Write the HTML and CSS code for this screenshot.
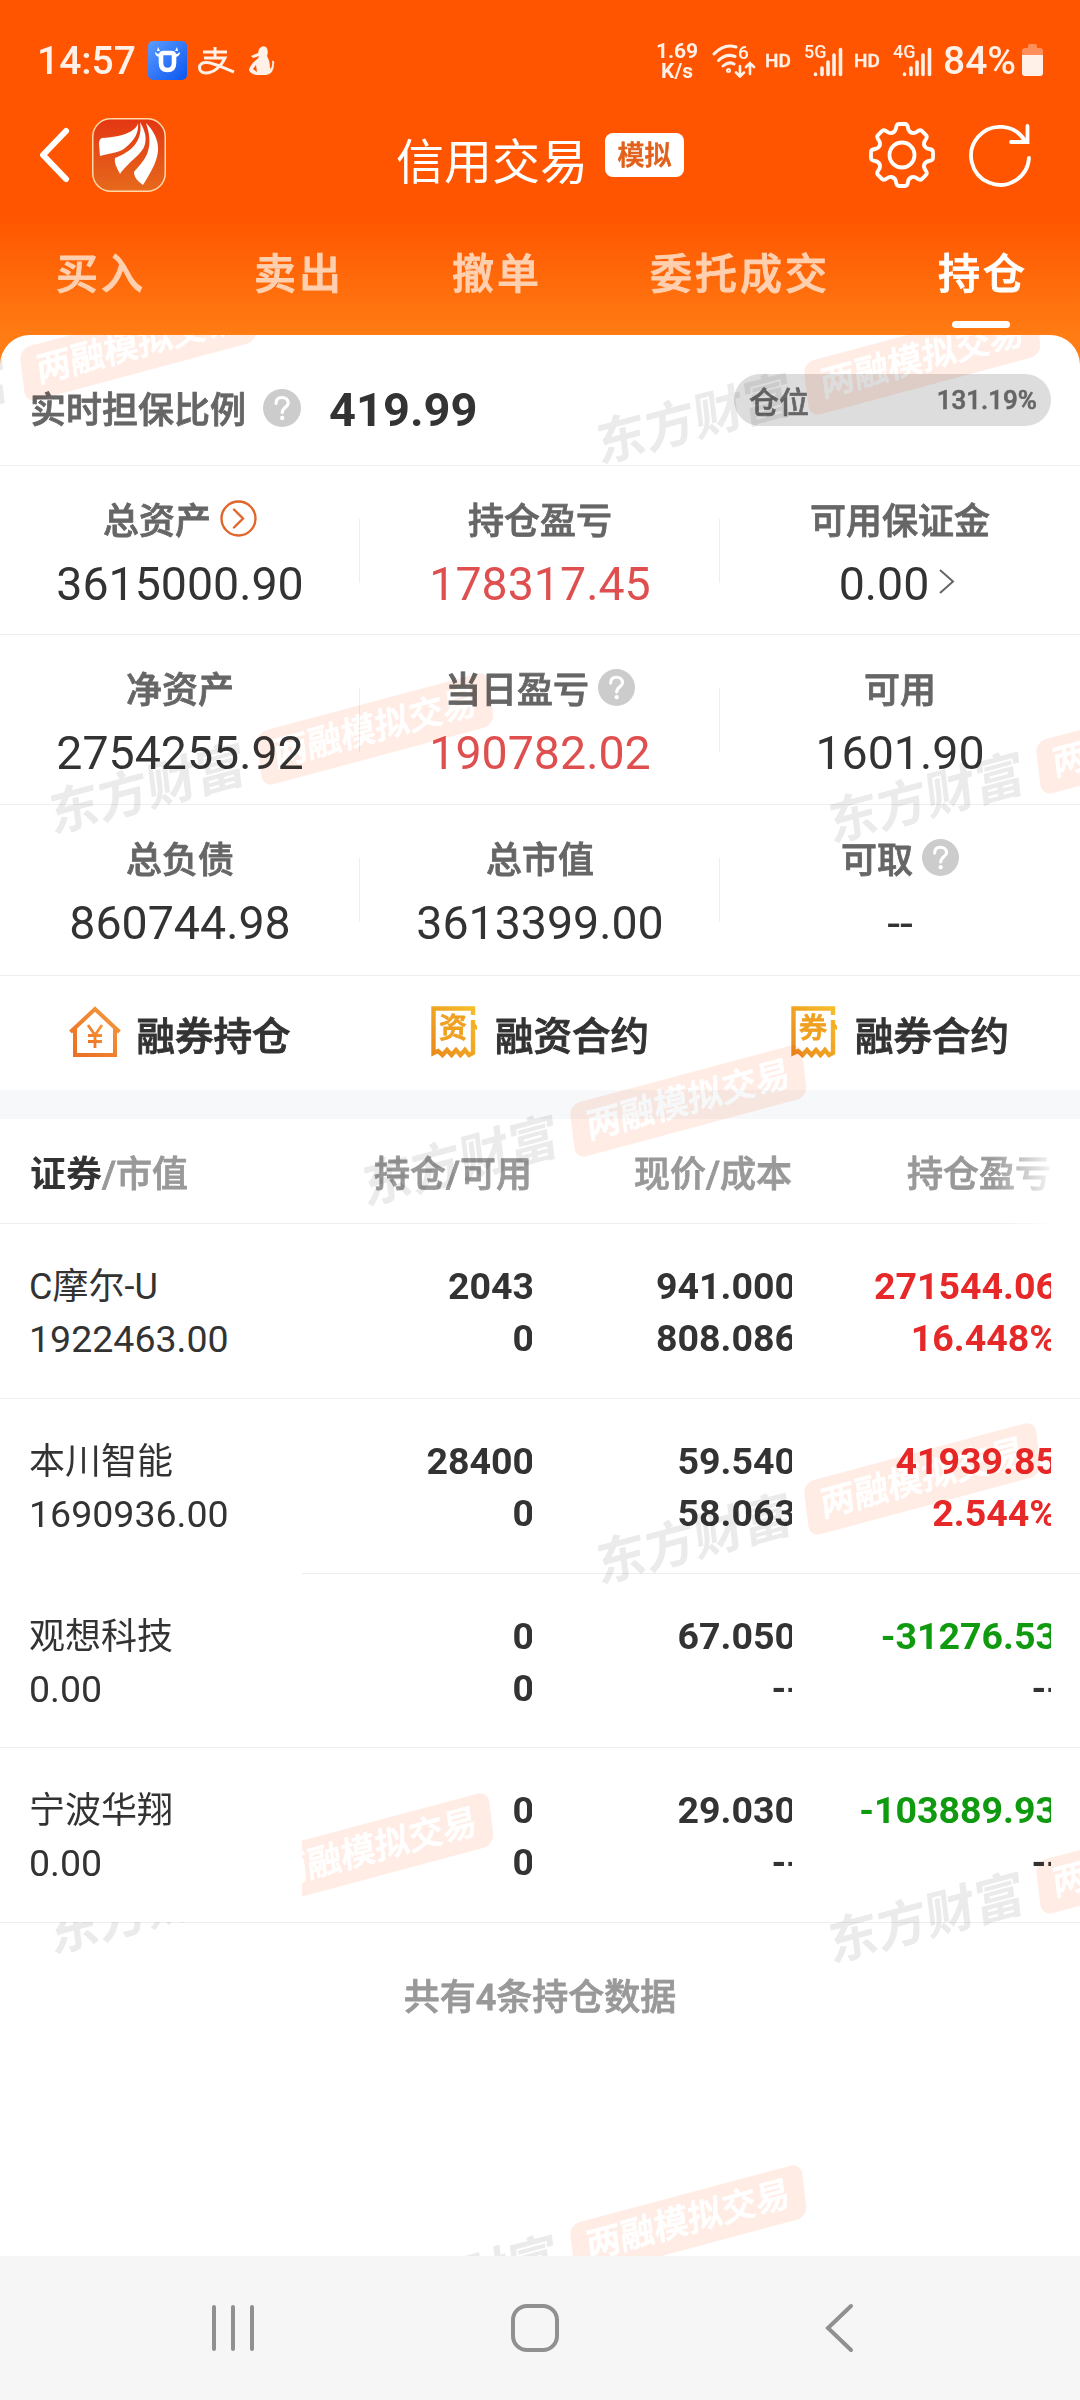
FILE: index.html
```html
<!DOCTYPE html>
<html lang="zh-CN">
<head>
  <meta charset="UTF-8" />
  <meta name="viewport" content="width=device-width, initial-scale=1.0" />
  <title>信用交易</title>
  <link rel="stylesheet" href="styles.css">
</head>
<body>
  <!-- shared icons -->
  <svg width="0" height="0" class="defs">
    <defs>
      <linearGradient id="blue" x1="0" y1="0" x2="1" y2="1">
        <stop offset="0" stop-color="#5c9cff" /><stop offset="1" stop-color="#0a55f0" />
      </linearGradient>
      <linearGradient id="red" x1="0" y1="0" x2="0" y2="1">
        <stop offset="0" stop-color="#e43613" /><stop offset="1" stop-color="#e66a1c" />
      </linearGradient>
      <linearGradient id="amber" x1="1" y1="0" x2="0" y2="1">
        <stop offset="0" stop-color="#f6bd2a" /><stop offset="1" stop-color="#ea8a1c" />
      </linearGradient>
      <linearGradient id="orange" x1="1" y1="0" x2="0" y2="1">
        <stop offset="0" stop-color="#f59a3c" /><stop offset="1" stop-color="#ec6d22" />
      </linearGradient>
      <symbol id="help" viewBox="0 0 38 38">
        <circle cx="19" cy="19" r="19" fill="#ccc" />
        <path d="M13 14.500C13 10.500 15.500 8.500 19 8.500C22.500 8.500 25.200 10.700 25.200 14C25.200 18 19.200 18.500 19.200 23.500" fill="none" stroke="#fff" stroke-width="3.200" stroke-linecap="round" />
        <circle cx="19.200" cy="29" r="2.200" fill="#fff" />
      </symbol>
      <symbol id="bars" viewBox="0 0 30 30">
        <path d="M2.500 27v.5M9 21v6.500M15 15v12.500M21 8v19.500M27.500 2.500v25" stroke="#fff0e8" stroke-width="3.600" stroke-linecap="round" />
      </symbol>
      <symbol id="receipt" viewBox="0 0 46 52">
        <path d="M42 9V2.500H2.500V47L7 45L11.500 49L16 44L20.500 49L25 44L29.500 49L34 44L38 49L42 47V14" fill="none" stroke="url(#amber)" stroke-width="4.400" />
        <path d="M41 14L46 20V24L41 21Z" fill="#f3ae24" />
      </symbol>
      <path id="tooth" d="M-9.300-22.400Q-6.400-23.500-6-27Q-5.500-31-3-31H3Q5.500-31 6-27Q6.400-23.500 9.300-22.400" />
    </defs>
  </svg>

  <header class="header">
    <div class="status">
      <span class="time">14:57</span>
      <svg width="39" height="39" viewBox="0 0 39 39">
        <rect width="39" height="39" rx="5" fill="url(#blue)" />
        <path d="M15.500 12H23.500Q26 12 26 15V22Q26 29 19.500 29Q13 29 13 22V15Q13 12 15.500 12Z" fill="none" stroke="#fff" stroke-width="4.600" />
        <path d="M7 11Q10 14 15 13L11 16Q7 15 7 11ZM32 11Q29 14 24 13L28 16Q32 15 32 11ZM10 6L12 10H9ZM29 6L27 10H30Z" fill="#fff" />
      </svg>
      <svg class="s-ali" width="37" height="28" viewBox="0 0 37 28" fill="none" stroke="#fff0e8" stroke-width="3">
        <path d="M5 5H29M17 0V11M6 11H27C23 20 15 26 8 26C3 26 1.500 23 1.500 20.500C1.500 17 5 15 9 15.500C18 16.500 25 21 36 25" />
      </svg>
      <svg width="26" height="30" viewBox="0 0 26 30" fill="#fff0e8">
        <path d="M10 3Q13-1 17 1Q20 4 18 10Q21 15 21 23Q24 21 23 15Q26 14 25 18Q25 28 17 29H9Q2 29 0 24Q1 19 7 14Q10 12 10 10L4 12L2 10L9 7ZM7 19L4 23L8 26Z" />
      </svg>
      <div class="speed">1.69<br>K/s</div>
      <svg class="wifi" width="44" height="34" viewBox="0 0 44 34" fill="none" stroke="#fff0e8" stroke-width="3" stroke-linecap="round">
        <path d="M2 10Q12-1 24 3M6.500 16.500Q14 9 23 12.500M11 22Q16.500 17 22 20" />
        <circle cx="16.500" cy="26.500" r="1" />
        <path d="M28 22V32M24 28.500L28 32.500L32 28.500M38 30V19M34 23L38 19L42 23" stroke-width="2.600" />
        <text x="26" y="15" class="wifi-six">6</text>
      </svg>
      <span class="hd">HD</span>
      <span class="signal">5G<svg width="30" height="30"><use href="#bars" /></svg></span>
      <span class="hd">HD</span>
      <span class="signal">4G<svg width="30" height="30"><use href="#bars" /></svg></span>
      <span class="battery-text">84%</span>
      <svg width="21" height="33" viewBox="0 0 21 33">
        <path d="M6 4V2Q6 0 8 0H13Q15 0 15 2V4H18Q21 4 21 7V14H0V7Q0 4 3 4Z" fill="#ff8f5a" />
        <path d="M0 11H21V29Q21 32 18 32H3Q0 32 0 29Z" fill="#fff0e8" />
      </svg>
    </div>

    <div class="titlebar">
      <div class="nav-left">
        <svg width="32" height="56" viewBox="0 0 32 56"><path d="M28 4L5 28L28 52" fill="none" stroke="#fff" stroke-width="6" stroke-linecap="round" stroke-linejoin="round" /></svg>
        <svg width="74" height="74" viewBox="0 0 74 74">
          <rect x=".75" y=".75" width="72.500" height="72.500" rx="18" fill="url(#red)" stroke="#ffd9a8" stroke-width="1.500" />
          <path d="M46 5C44 14 29 19 10 20Q7 21 7 26L8 38C18 35 27 35 33 30C43 22 47 14 46 5ZM48 4C52 11 55 18 53 26C51 36 36 44 28 56C25 50 22 45 23 40C33 36 52 27 48 4ZM54 5C61 12 67 22 66 33C65 45 57 57 51 67C47 64 42 60 42 54C50 44 64 34 54 5Z" fill="#fff" />
        </svg>
      </div>
      <div class="title">
        <h1>信用交易</h1>
        <span class="badge">模拟</span>
      </div>
      <div class="nav-right">
        <svg width="66" height="66" viewBox="-33 -33 66 66" fill="none" stroke="#fff" stroke-width="3.800" stroke-linecap="round">
          <circle r="12.500" />
          <use href="#tooth" /><use href="#tooth" transform="rotate(45)" /><use href="#tooth" transform="rotate(90)" /><use href="#tooth" transform="rotate(135)" />
          <use href="#tooth" transform="rotate(180)" /><use href="#tooth" transform="rotate(225)" /><use href="#tooth" transform="rotate(270)" /><use href="#tooth" transform="rotate(315)" />
        </svg>
        <svg width="62" height="64" viewBox="0 0 62 64" fill="none" stroke="#fff" stroke-width="3.800" stroke-linecap="round">
          <path d="M60 35A29 29 0 1 1 56 18M58.500 3V19H42" />
        </svg>
      </div>
    </div>

    <nav class="tabs">
      <a>买入</a>
      <a>卖出</a>
      <a>撤单</a>
      <a>委托成交</a>
      <a class="active">持仓</a>
    </nav>
  </header>

  <main class="sheet">
    <section class="summary">
      <span class="label">实时担保比例</span>
      <svg class="help" width="38" height="38"><use href="#help" /></svg>
      <strong>419.99</strong>
      <div class="position"><span>仓位</span><b>131.19%</b></div>
    </section>

    <section class="metrics">
      <div class="metric">
        <div class="label">总资产
          <svg width="37" height="37" viewBox="0 0 37 37" fill="none" stroke="#e0662a" stroke-width="2.400"><circle cx="18.500" cy="18.500" r="17" /><path d="M14 9.500L23 18.500L14 27.500" stroke-linecap="round" /></svg>
        </div>
        <div class="value">3615000.90</div>
      </div>
      <div class="metric">
        <div class="label">持仓盈亏</div>
        <div class="value loss">178317.45</div>
      </div>
      <div class="metric">
        <div class="label">可用保证金</div>
        <div class="value">0.00<svg class="more" width="17" height="27" viewBox="0 0 17 27"><path d="M2 2L15 13.500L2 25" fill="none" stroke="#666" stroke-width="2" /></svg></div>
      </div>
      <div class="metric">
        <div class="label">净资产</div>
        <div class="value">2754255.92</div>
      </div>
      <div class="metric">
        <div class="label">当日盈亏<svg width="37" height="37"><use href="#help" /></svg></div>
        <div class="value loss">190782.02</div>
      </div>
      <div class="metric">
        <div class="label">可用</div>
        <div class="value">1601.90</div>
      </div>
      <div class="metric">
        <div class="label">总负债</div>
        <div class="value">860744.98</div>
      </div>
      <div class="metric">
        <div class="label">总市值</div>
        <div class="value">3613399.00</div>
      </div>
      <div class="metric">
        <div class="label">可取<svg width="37" height="37"><use href="#help" /></svg></div>
        <div class="value">--</div>
      </div>
    </section>

    <section class="links">
      <a>
        <svg width="52" height="52" viewBox="0 0 52 52" fill="none" stroke="url(#orange)" stroke-width="4">
          <path d="M1.500 26L26 3L50.500 26M6 23V49H46V23" />
          <path d="M19 19L26 29L33 19M26 29V42M19 29.500H33M19 35.500H33" stroke-width="2.800" />
        </svg>
        融券持仓
      </a>
      <a><span class="receipt"><svg width="46" height="52"><use href="#receipt" /></svg><i>资</i></span>融资合约</a>
      <a><span class="receipt"><svg width="46" height="52"><use href="#receipt" /></svg><i>券</i></span>融券合约</a>
    </section>

    <section class="holdings">
      <div class="row head">
        <div><b>证券</b>/市值</div>
        <div>持仓/可用</div>
        <div>现价/成本</div>
        <div>持仓盈亏</div>
      </div>
      <div class="row">
        <div class="name">C摩尔-U<br>1922463.00</div>
        <div class="num"><p>2043</p><p>0</p></div>
        <div class="num"><p>941.000</p><p>808.086</p></div>
        <div class="num red"><p>271544.06</p><p>16.448%</p></div>
      </div>
      <div class="row">
        <div class="name cover">本川智能<br>1690936.00</div>
        <div class="num"><p>28400</p><p>0</p></div>
        <div class="num"><p>59.540</p><p>58.063</p></div>
        <div class="num red"><p>41939.85</p><p>2.544%</p></div>
      </div>
      <div class="row">
        <div class="name">观想科技<br>0.00</div>
        <div class="num"><p>0</p><p>0</p></div>
        <div class="num"><p>67.050</p><p class="none">--</p></div>
        <div class="num"><p class="green">-31276.53</p><p class="none">--</p></div>
      </div>
      <div class="row">
        <div class="name">宁波华翔<br>0.00</div>
        <div class="num"><p>0</p><p>0</p></div>
        <div class="num"><p>29.030</p><p class="none">--</p></div>
        <div class="num"><p class="green">-103889.93</p><p class="none">--</p></div>
      </div>
    </section>
    <p class="total">共有4条持仓数据</p>

    <div class="watermarks">
      <div class="mark m1">东方财富<span>两融模拟交易</span></div>
      <div class="mark m2">东方财富<span>两融模拟交易</span></div>
      <div class="mark m3">东方财富<span>两融模拟交易</span></div>
      <div class="mark m4">东方财富<span>两融模拟交易</span></div>
      <div class="mark m5">东方财富<span>两融模拟交易</span></div>
      <div class="mark m6">东方财富<span>两融模拟交易</span></div>
      <div class="mark m7">东方财富<span>两融模拟交易</span></div>
      <div class="mark m8">东方财富<span>两融模拟交易</span></div>
      <div class="mark m9">东方财富<span>两融模拟交易</span></div>
    </div>
  </main>

  <footer class="softkeys">
    <svg width="46" height="50" viewBox="0 0 46 50"><path d="M4 4V46M23 4V46M42 4V46" /></svg>
    <svg width="50" height="50" viewBox="0 0 50 50"><rect x="3" y="3" width="44" height="44" rx="14" /></svg>
    <svg width="32" height="52" viewBox="0 0 32 52"><path d="M28 4L5 26L28 48" /></svg>
  </footer>
</body>
</html>
```
FILE: styles.css
```css
* {
  box-sizing: border-box;
}
body {
  margin: 0;
  width: 1080px;
  height: 2400px;
  overflow: hidden;
  display: flex;
  flex-direction: column;
  font-family: Roboto, "Noto Sans CJK SC", sans-serif;
  color: #333;
  background: linear-gradient(#ff5500 215px, #ff7d14 340px, #ff7d14);
}
h1, p {
  margin: 0;
}
svg {
  flex: none;
  display: block;
}
.defs {
  position: absolute;
}

/* status bar */
.header {
  height: 335px;
  flex: none;
  color: #fff;
}
.status {
  display: flex;
  align-items: center;
  height: 121px;
  padding: 0 37px 0 37px;
  color: #fff0e8;
  font-weight: 500;
}
.time {
  font-size: 39px;
  width: 111px;
}
.s-ali {
  margin: 0 14px 0 11px;
}
.speed {
  margin-left: auto;
  width: 44px;
  font-size: 21px;
  line-height: 20px;
  font-weight: 700;
  text-align: center;
}
.wifi {
  margin: 0 9px 0 13px;
}
.wifi-six {
  font-size: 19px;
  font-weight: 500;
  fill: #fff0e8;
  stroke: none;
}
.hd {
  font-size: 19px;
  width: 39px;
  -webkit-text-stroke: 0.4px;
}
.signal {
  display: flex;
  width: 38px;
  height: 34px;
  margin-right: 12px;
  font-size: 18px;
  line-height: 16px;
}
.signal svg {
  margin: 3px 0 0 -14px;
}
.battery-text {
  font-size: 39px;
  width: 79px;
}

/* title bar */
.titlebar {
  display: grid;
  grid-template-columns: 1fr auto 1fr;
  grid-template-rows: 68px;
  align-items: center;
}
.nav-left, .nav-right {
  display: flex;
  align-items: center;
}
.nav-left {
  padding-left: 38px;
  gap: 22px;
}
.nav-right {
  justify-content: flex-end;
  padding-right: 49px;
  gap: 34px;
}
.title {
  display: flex;
  align-items: center;
}
.title h1 {
  font-size: 48px;
  font-weight: 400;
  line-height: 50px;
  padding-top: 16px;
}
.badge {
  margin-left: 17px;
  width: 79px;
  height: 44px;
  border-radius: 8px;
  background: #fff;
  color: #e2601a;
  font-size: 27px;
  font-weight: 500;
  line-height: 46px;
  text-align: center;
  -webkit-text-stroke: 0.6px;
}

/* tabs */
.tabs {
  display: flex;
  gap: 108px;
  padding: 56px 0 0 56px;
  font-size: 42px;
  font-weight: 500;
  letter-spacing: 3px;
  line-height: 60px;
  color: #ffd0b0;
  -webkit-text-stroke: 0.9px;
}
.tabs .active {
  color: #fff;
}
.tabs .active::after {
  content: "";
  display: block;
  width: 58px;
  height: 7px;
  margin: 16px 0 0 14px;
  border-radius: 4px;
  background: #fff;
}

/* sheet */
.sheet {
  position: relative;
  flex: 1;
  overflow: hidden;
  background: #fff;
  border-radius: 30px 30px 0 0;
}
.summary {
  display: flex;
  align-items: center;
  height: 131px;
  padding: 20px 29px 0 30px;
  border-bottom: 1px solid #eee;
}
.label {
  font-size: 36px;
  font-weight: 500;
  line-height: 44px;
  color: #666;
  -webkit-text-stroke: 0.8px;
}
.summary .label {
  padding-top: 2px;
}
.summary .help {
  margin: 0 28px 5px 17px;
}
.summary strong {
  font-size: 47px;
  margin-bottom: 2px;
}
.position {
  display: flex;
  align-items: center;
  justify-content: space-between;
  width: 317px;
  height: 52px;
  margin: 0 0 20px auto;
  padding: 0 14px 0 15px;
  border-radius: 26px;
  background: #ddd;
  color: #666;
  font-size: 30px;
  font-weight: 500;
  -webkit-text-stroke: 0.6px;
}
.position b {
  font-size: 26px;
  font-weight: 500;
}
.metrics {
  display: grid;
  grid-template-columns: repeat(3, 1fr);
  grid-template-rows: 169px 170px 171px;
}
.metric {
  padding-top: 34px;
  border-bottom: 1px solid #eee;
  background: linear-gradient(#eee, #eee) right 53px / 1px 64px no-repeat;
}
.metric:nth-child(3n) {
  background: none;
}
.metric .label {
  display: flex;
  align-items: center;
  justify-content: center;
  gap: 9px;
}
.metric .label svg {
  margin-bottom: 7px;
}
.value {
  display: flex;
  align-items: center;
  justify-content: center;
  margin-top: 13px;
  font-size: 46.5px;
  line-height: 54px;
}
.value.loss {
  color: #df4f4f;
}
.more {
  margin: 0 6px 5px 9px;
}
.links {
  display: grid;
  grid-template-columns: repeat(3, 1fr);
  height: 114px;
}
.links a {
  display: flex;
  align-items: center;
  justify-content: center;
  gap: 15px;
  font-size: 38.5px;
  font-weight: 500;
  -webkit-text-stroke: 0.9px;
}
.links svg {
  margin-bottom: 2px;
}
.receipt {
  position: relative;
  margin-right: 3px;
}
.receipt i {
  position: absolute;
  left: 8px;
  top: 4px;
  font-size: 28px;
  line-height: 38px;
  font-style: normal;
  color: #f0a020;
}

/* holdings */
.holdings {
  border-top: 29px solid #f7f8fa;
}
.row {
  display: grid;
  grid-template-columns: 302px 230px 260px 259px;
  height: 174.75px;
  border-bottom: 1px solid #eee;
}
.head {
  position: relative;
  height: 105px;
  font-size: 36px;
  font-weight: 500;
  line-height: 113px;
  color: #999;
  text-align: right;
  -webkit-text-stroke: 0.8px;
}
.head div:first-child {
  padding-left: 30px;
  text-align: left;
}
.head b {
  color: #333;
  -webkit-text-stroke: 0;
}
.head::after {
  content: "";
  position: absolute;
  right: 0;
  top: 0;
  width: 88px;
  height: 105px;
  background: linear-gradient(to right, rgba(255, 255, 255, 0), #fff 75%);
}
.name {
  position: relative;
  z-index: 2;
  padding: 37px 0 0 29px;
  background: #fff;
  font-size: 37.5px;
  line-height: 52px;
}
.name::first-line {
  font-size: 36px;
}
.cover {
  margin-bottom: -1px;
}
.num {
  overflow: hidden;
  padding-top: 36px;
  font-size: 37.5px;
  font-weight: 700;
  line-height: 52px;
}
.num p {
  display: flex;
  justify-content: flex-end;
  margin-right: -4px;
}
.num:nth-child(2) p {
  margin-right: -2px;
}
.num:nth-child(4) p {
  margin-right: -6px;
}
.num p.none {
  margin-right: -9px;
}
.num:nth-child(4) p.none {
  margin-right: -10px;
}
.red {
  color: #e62828;
}
.green {
  color: #109a10;
}
.total {
  padding-top: 50px;
  font-size: 36px;
  font-weight: 500;
  line-height: 50px;
  text-align: center;
  color: #999;
  -webkit-text-stroke: 0.8px;
}

/* watermark layer */
.watermarks {
  position: absolute;
  inset: 0;
  z-index: 1;
  mix-blend-mode: multiply;
}
.mark {
  position: absolute;
  display: flex;
  align-items: center;
  justify-content: space-between;
  width: 457px;
  height: 54px;
  transform: rotate(-15deg) skewX(-8deg);
  font-size: 50.5px;
  font-weight: 700;
  line-height: 54px;
  color: #ebebeb;
}
.mark span {
  width: 240px;
  height: 54px;
  border-radius: 11px;
  background: #ffede5;
  color: #fff;
  font-size: 35px;
  font-weight: 500;
  line-height: 53px;
  text-align: center;
  -webkit-text-stroke: 0.8px;
}
.m1 { left: -195px; top: 11px; }
.m2 { left: 589px; top: 25px; }
.m3 { left: 42px; top: 395px; }
.m4 { left: 821px; top: 404px; }
.m5 { left: 355px; top: 767px; }
.m6 { left: 589px; top: 1145px; }
.m7 { left: 42px; top: 1515px; }
.m8 { left: 821px; top: 1524px; }
.m9 { left: 355px; top: 1887px; }

/* system keys */
.softkeys {
  display: flex;
  align-items: center;
  height: 144px;
  flex: none;
  gap: 254px;
  padding-left: 210px;
  background: #f6f6f6;
}
.softkeys svg {
  fill: none;
  stroke: #909090;
  stroke-width: 4;
  stroke-linecap: round;
}
.softkeys svg:last-child {
  margin-left: 9px;
}
```
